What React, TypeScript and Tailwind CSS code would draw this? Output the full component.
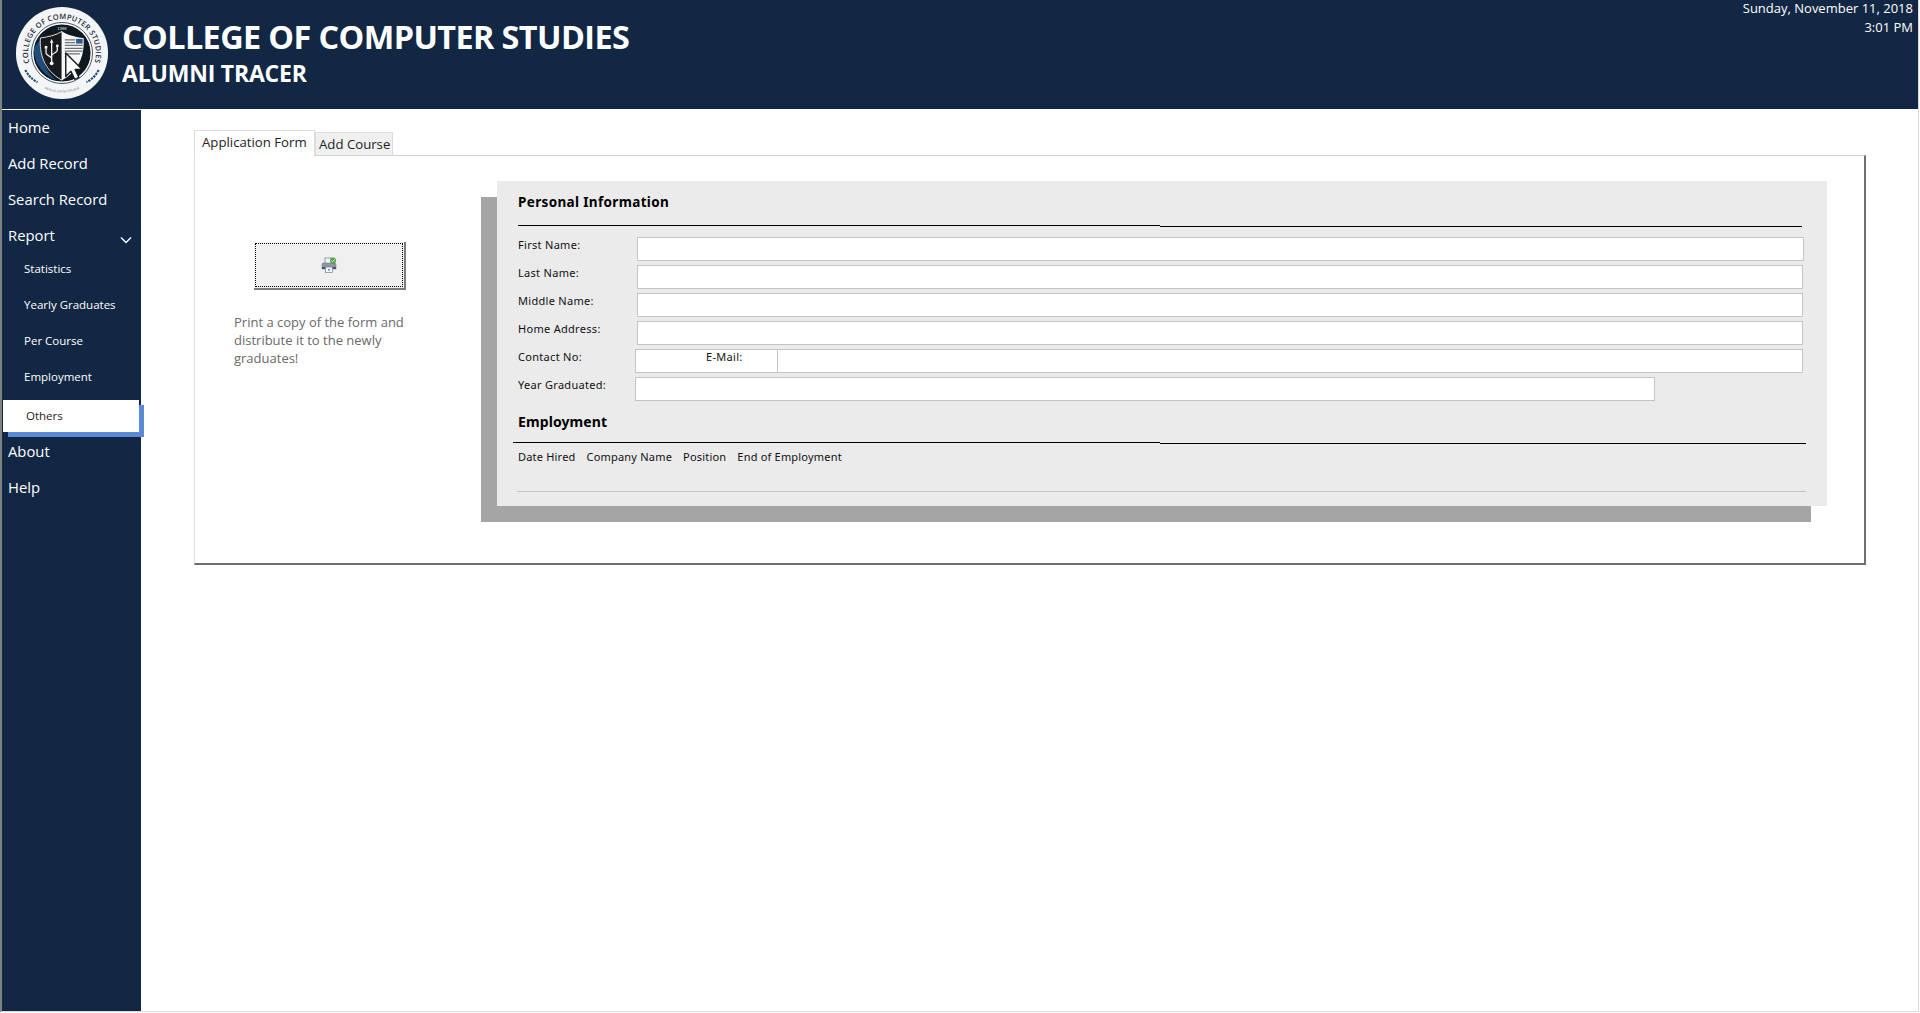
import React from "react";

const sans = "font-['Open_Sans','Noto_Sans',sans-serif]";
const labelFont = "font-['Noto_Sans','Open_Sans',sans-serif]";

const Logo: React.FC = () => {
  return (
    <svg viewBox="0 0 100 100" className="w-[94px] h-[94px] shrink-0">
      <defs>
        <path id="arcTop" d="M 18.8 68 A 36 36 0 1 1 81.2 68" fill="none" />
        <path id="arcBottom" d="M 17 76 A 42 42 0 0 0 83 76" fill="none" />
        <clipPath id="shield">
          <path d="M27 34C35 33 44 31 50 27C56 31 65 33 73 34C74 50 70 68 50 79C30 68 26 50 27 34Z" />
        </clipPath>
      </defs>
      <circle cx="50" cy="50" r="49" fill="#f4f5f6" />
      <circle cx="50" cy="50" r="31" fill="#101820" stroke="#fff" strokeWidth="1.2" />
      <circle cx="50" cy="50" r="32.5" fill="none" stroke="#122744" strokeWidth="0.8" />
      <path d="M20.5 44C19 58 28 73 44 79C33 70 26 56 27.5 35Z" fill="#1e4d7c" />
      <text x="50" y="25" textAnchor="middle" fontSize="4.5" fill="#dfe5ec" fontFamily="'Liberation Sans', sans-serif">1988</text>
      <path d="M27 34C35 33 44 31 50 27V79C30 68 26 50 27 34Z" fill="#17191d" stroke="#fff" strokeWidth="0.9" />
      <g clipPath="url(#shield)">
        <rect x="50" y="26" width="26" height="54" fill="#f7f7f7" />
        <rect x="65" y="35" width="7" height="5" fill="#2b5d8c" />
        <path d="M53 36H64M53 39H64M53 42H72M53 45H72M53 48H72M53 51H69M53 54H59" stroke="#6b6f76" strokeWidth="1.3" />
      </g>
      <path d="M39 38V60M33 45V50C33 53 39 53 39 56M45 43V47C45 50 39 50 39 53" fill="none" stroke="#f2f2f2" strokeWidth="1.4" />
      <path d="M39 35L37 39H41Z" fill="#f2f2f2" />
      <circle cx="39" cy="61" r="2" fill="#f2f2f2" />
      <rect x="31.6" y="42.5" width="2.8" height="2.8" fill="#f2f2f2" />
      <circle cx="45" cy="42.5" r="1.5" fill="#f2f2f2" />
      <path d="M54 50V75L59.5 69.5L63.5 78L68 76L64 67.5L71.5 67.5Z" fill="#fff" stroke="#15181c" strokeWidth="1.5" strokeLinejoin="round" />
      <path d="M11 68C14 74 18 78 24 81M89 68C86 74 82 78 76 81" fill="none" stroke="#1e4d7c" strokeWidth="2.2" strokeDasharray="2.5 1" />
      <text fontSize="7.9" fill="#1d2836" fontWeight="600" fontFamily="'Open Sans', sans-serif" letterSpacing="0.3">
        <textPath href="#arcTop" startOffset="50%" textAnchor="middle">COLLEGE OF COMPUTER STUDIES</textPath>
      </text>
      <text fontSize="3" fill="#4c5866" fontFamily="'Open Sans', sans-serif">
        <textPath href="#arcBottom" startOffset="50%" textAnchor="middle">MEDICAL CENTER COLLEGE</textPath>
      </text>
    </svg>
  );
};

const PrinterIcon: React.FC = () => {
  return (
    <svg viewBox="0 0 16 16" className="w-4 h-4">
      <rect x="4" y="1" width="7" height="6" fill="#f7f7f7" stroke="#7b8490" strokeWidth="0.8" />
      <path d="M1 7.5C1 6.5 1.6 6 2.5 6H13.5C14.4 6 15 6.5 15 7.5V12H1Z" fill="#8d96a3" stroke="#666e7a" strokeWidth="0.5" />
      <rect x="1" y="10" width="14" height="2" fill="#4c5562" />
      <rect x="4.5" y="10" width="7" height="5.5" fill="#f3f6fa" stroke="#6f7d90" strokeWidth="0.7" />
      <rect x="7" y="12" width="2" height="1.5" fill="#5f87b8" />
      <circle cx="12" cy="3.5" r="3" fill="#55a53f" />
      <path d="M10.6 3.5L11.7 4.7L13.5 2.5" fill="none" stroke="#fff" strokeWidth="0.9" />
    </svg>
  );
};

const NavItem: React.FC<{ label: string; sub?: boolean; arrow?: boolean }> = ({ label, sub, arrow }) => {
  return (
    <div
      className={
        sub
          ? "h-9 flex items-center pl-[22px] text-[11.5px] text-white"
          : "h-9 flex items-center justify-between pb-[2px] pl-[6px] pr-[9px] text-[14.8px] text-white"
      }
    >
      <span>{label}</span>
      {arrow && (
        <svg viewBox="0 0 12 8" className="w-3 h-2 mt-[9px]">
          <path d="M1 1.5L6 6.5L11 1.5" fill="none" stroke="#fff" strokeWidth="1.4" />
        </svg>
      )}
    </div>
  );
};

const Sidebar: React.FC = () => {
  return (
    <aside className={`w-[139px] shrink-0 bg-[#122744] ${sans}`}>
      <NavItem label="Home" />
      <NavItem label="Add Record" />
      <NavItem label="Search Record" />
      <NavItem label="Report" arrow />
      <div className="-mt-[3px]">
        <NavItem label="Statistics" sub />
        <NavItem label="Yearly Graduates" sub />
        <NavItem label="Per Course" sub />
        <NavItem label="Employment" sub />
      </div>
      <div className="mt-[5px] ml-px w-[136px] h-8 bg-white pl-[23px] flex items-center text-[11.5px] text-[#222] shadow-[5px_5px_0_#5b8bd6]">
        Others
      </div>
      <div className="mt-[2px]">
        <NavItem label="About" />
        <NavItem label="Help" />
      </div>
    </aside>
  );
};

const FieldLabel: React.FC<{ text: string; width: string }> = ({ text, width }) => {
  return <label className={`${width} shrink-0 -mt-[8px] leading-[16px] text-[11px] text-[#111] tracking-[0.3px]`}>{text}</label>;
};

const inputClass = "h-6 bg-white border border-[#c4c4c4] rounded-none outline-none";

const Rule: React.FC<{ color: string; left: string; right: string }> = ({ color, left, right }) => {
  return (
    <div className="flex h-[2px]">
      <div className={`${left} h-px ${color}`} />
      <div className={`${right} h-px mt-px ${color}`} />
    </div>
  );
};

const ApplicationForm: React.FC = () => {
  return (
    <section className={`w-[1330px] h-[325px] ml-[93px] mt-[25px] shrink-0 bg-[#ebebeb] pt-3 pl-[21px] shadow-[-16px_16px_0_#a5a5a5] ${labelFont}`}>
      <h2 className="h-8 leading-[19px] text-[13.5px] font-bold text-black tracking-[0.35px]">Personal Information</h2>
      <Rule color="bg-black" left="w-[642px]" right="w-[642px]" />
      <div className="mt-[10px] flex flex-col gap-1">
        <div className="flex items-center">
          <FieldLabel text="First Name:" width="w-[119px]" />
          <input className={`${inputClass} w-[1167px]`} />
        </div>
        <div className="flex items-center">
          <FieldLabel text="Last Name:" width="w-[119px]" />
          <input className={`${inputClass} w-[1166px]`} />
        </div>
        <div className="flex items-center">
          <FieldLabel text="Middle Name:" width="w-[119px]" />
          <input className={`${inputClass} w-[1166px]`} />
        </div>
        <div className="flex items-center">
          <FieldLabel text="Home Address:" width="w-[119px]" />
          <input className={`${inputClass} w-[1166px]`} />
        </div>
        <div className="flex items-center">
          <FieldLabel text="Contact No:" width="w-[117px]" />
          <div className="h-6 w-[143px] shrink-0 bg-white border border-[#c4c4c4] pl-[70px] text-[11px] leading-[14px] tracking-[0.3px] text-[#111]">E-Mail:</div>
          <input className={`${inputClass} w-[1025px] border-l-0`} />
        </div>
        <div className="flex items-center">
          <FieldLabel text="Year Graduated:" width="w-[117px]" />
          <input className={`${inputClass} w-[1020px]`} />
        </div>
      </div>
      <h2 className="mt-3 leading-[18px] text-[14px] font-bold text-black tracking-[0.1px]">Employment</h2>
      <div className="mt-[11px] -ml-[5px]">
        <Rule color="bg-black" left="w-[647px]" right="w-[646px]" />
      </div>
      <div className="mt-[5px] flex gap-[11px] leading-[16px] text-[11px] tracking-[0.2px] text-[#111]">
        <span>Date Hired</span>
        <span>Company Name</span>
        <span>Position</span>
        <span>End of Employment</span>
      </div>
      <div className="mt-[26px] -ml-px w-[1289px] h-px bg-[#c4c4c4]" />
    </section>
  );
};

const App: React.FC = () => {
  return (
    <div className={`h-[1012px] mr-px flex flex-col border-l-2 border-l-[#808080] border-r border-r-[#d8d8d8] border-b border-b-[#dcdcdc] overflow-hidden bg-white ${sans}`}>
      <header className="h-[109px] shrink-0 bg-[#122744] text-white flex justify-between">
        <div className="flex items-center pl-[13px] pb-[3px]">
          <Logo />
          <div className="ml-[13px] self-start pt-[14px]">
            <h1 className="text-[32.4px] leading-[44px] font-bold tracking-[-0.6px]">COLLEGE OF COMPUTER STUDIES</h1>
            <p className="text-[23px] leading-[30px] font-bold tracking-[-0.2px]">ALUMNI TRACER</p>
          </div>
        </div>
        <div className="text-right pr-[5px] text-[13px]">
          <div className="leading-[16px]">Sunday, November 11, 2018</div>
          <div className="leading-[16px] mt-[3px]">3:01 PM</div>
        </div>
      </header>
      <div className="flex-1 flex mt-px min-h-0">
        <Sidebar />
        <main className="flex-1 pl-[53px] pt-5">
          <div className="flex items-end h-[25px]">
            <div className="h-[26px] w-[121px] -mb-px z-10 relative bg-white border border-b-0 border-[#dcdcdc] pl-[7px] text-[13.2px] leading-[23px] text-[#222] whitespace-nowrap">Application Form</div>
            <div className="h-[23px] w-[78px] bg-[#f0f0f0] border border-b-0 border-[#dcdcdc] pl-[3px] text-[13.2px] leading-[23px] text-[#222] whitespace-nowrap">Add Course</div>
          </div>
          <div className="w-[1672px] h-[410px] flex bg-white border-t border-t-[#d2d2d2] border-l border-l-[#dedede] border-r-2 border-r-[#6e6e6e] border-b-2 border-b-[#6e6e6e]">
            <div className="w-[170px] ml-[39px] shrink-0">
              <button className="mt-[86px] ml-[20px] w-[152px] h-12 block bg-[#f0f0f0] border-r-2 border-b-2 border-r-[#7d7d7d] border-b-[#7d7d7d] p-px">
                <span className="w-full h-full flex items-center justify-center border border-dotted border-black">
                  <PrinterIcon />
                </span>
              </button>
              <p className="mt-[23px] w-[190px] text-[13px] leading-[18px] text-[#6a6a6a]">
                Print a copy of the form and distribute it to the newly graduates!
              </p>
            </div>
            <ApplicationForm />
          </div>
        </main>
      </div>
    </div>
  );
};

export default App;
